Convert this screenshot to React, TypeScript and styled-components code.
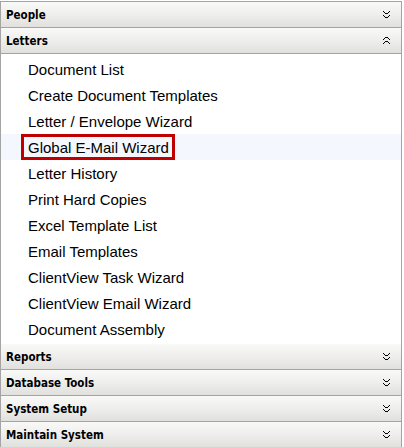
import React from "react";
import styled, { createGlobalStyle } from "styled-components";

const Global = createGlobalStyle`
  html, body { margin: 0; padding: 0; background: #ffffff; }
  body { width: 404px; height: 447px; overflow: hidden; }
`;

const Panel = styled.div`
  width: 400px;
  margin-top: 1px;
  border: 1px solid #a4a4a4;
  border-bottom: none;
  display: flex;
  flex-direction: column;
`;

const Header = styled.div`
  height: 25px;
  border-bottom: 1px solid #a4a4a4;
  background: linear-gradient(to bottom, #f9f9f8 0%, #eeeeec 50%, #e1e0dd 100%);
  display: flex;
  align-items: center;
  justify-content: space-between;
  padding: 0 11px 0 5px;
  font-family: "DejaVu Sans Condensed", "DejaVu Sans", Verdana, sans-serif;
  font-weight: bold;
  font-size: 11.5px;
  color: #000;
`;

const Content = styled.div`
  display: flex;
  flex-direction: column;
  padding: 2px 0 2px;
`;

const Item = styled.div<{ $active?: boolean }>`
  height: 26px;
  display: flex;
  align-items: center;
  padding-left: 20px;
  background: ${(p) => (p.$active ? "#f4f8fe" : "transparent")};
  font-family: "Liberation Sans", Arial, sans-serif;
  font-size: 15px;
  color: #000;
`;

const Label = styled.span<{ $boxed?: boolean }>`
  display: inline-flex;
  align-items: center;
  height: 20px;
  padding: 0 3px 0 4px;
  border: 3px solid ${(p) => (p.$boxed ? "#c00000" : "transparent")};
`;

const Chevron = ({ up }: { up?: boolean }) => (
  <svg width="7" height="9" viewBox="0 0 7 9" shapeRendering="crispEdges">
    <g transform={up ? "rotate(180 3.5 4.5)" : undefined} fill="#000">
      <rect x="0" y="1" width="1" height="1" />
      <rect x="6" y="1" width="1" height="1" />
      <rect x="1" y="2" width="1" height="1" />
      <rect x="5" y="2" width="1" height="1" />
      <rect x="2" y="3" width="3" height="1" />
      <rect x="0" y="5" width="1" height="1" />
      <rect x="6" y="5" width="1" height="1" />
      <rect x="1" y="6" width="1" height="1" />
      <rect x="5" y="6" width="1" height="1" />
      <rect x="2" y="7" width="3" height="1" />
    </g>
  </svg>
);

const items = [
  "Document List",
  "Create Document Templates",
  "Letter / Envelope Wizard",
  "Global E-Mail Wizard",
  "Letter History",
  "Print Hard Copies",
  "Excel Template List",
  "Email Templates",
  "ClientView Task Wizard",
  "ClientView Email Wizard",
  "Document Assembly",
];

export default function App() {
  return (
    <>
      <Global />
      <Panel>
        <Header>
          <span>People</span>
          <Chevron />
        </Header>
        <Header>
          <span>Letters</span>
          <Chevron up />
        </Header>
        <Content>
          {items.map((t) => (
            <Item key={t} $active={t === "Global E-Mail Wizard"}>
              <Label $boxed={t === "Global E-Mail Wizard"}>{t}</Label>
            </Item>
          ))}
        </Content>
        {["Reports", "Database Tools", "System Setup", "Maintain System"].map((h) => (
          <Header key={h}>
            <span>{h}</span>
            <Chevron />
          </Header>
        ))}
      </Panel>
    </>
  );
}
